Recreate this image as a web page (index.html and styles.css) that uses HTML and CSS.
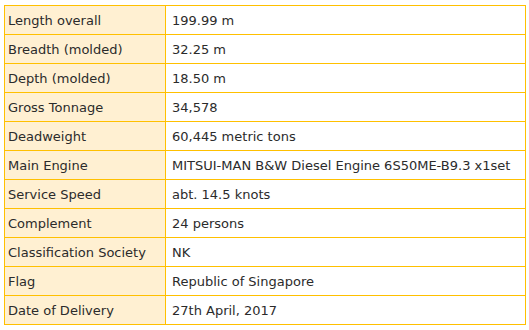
FILE: index.html
```html
<!DOCTYPE html>
<html>
<head>
<meta charset="utf-8">
<link rel="stylesheet" href="styles.css">
</head>
<body>
<table class="spec">
<tr><th>Length overall</th><td>199.99 m</td></tr>
<tr><th>Breadth (molded)</th><td>32.25 m</td></tr>
<tr><th>Depth (molded)</th><td>18.50 m</td></tr>
<tr><th>Gross Tonnage</th><td>34,578</td></tr>
<tr><th>Deadweight</th><td>60,445 metric tons</td></tr>
<tr><th>Main Engine</th><td>MITSUI-MAN B&amp;W Diesel Engine 6S50ME-B9.3 x1set</td></tr>
<tr><th>Service Speed</th><td>abt. 14.5 knots</td></tr>
<tr><th>Complement</th><td>24 persons</td></tr>
<tr><th>Classification Society</th><td>NK</td></tr>
<tr><th>Flag</th><td>Republic of Singapore</td></tr>
<tr><th>Date of Delivery</th><td>27th April, 2017</td></tr>
</table>
</body>
</html>
```
FILE: styles.css
```css
html, body { margin: 0; padding: 0; background: #fff; }
body { padding: 5px 0 0 4px; }
.spec {
  border-collapse: collapse;
  width: 522px;
  font-family: "DejaVu Sans", Verdana, sans-serif;
  font-size: 13px;
  color: #2b2b2b;
}
.spec th, .spec td {
  border: 1px solid #FFC000;
  height: 29px;
  padding: 0 0 0 5px;
  text-align: left;
  font-weight: normal;
  box-sizing: border-box;
}
.spec th {
  width: 161px;
  background: #FFF0D2;
  padding-left: 3px;
}
.spec td { padding-left: 6px; }
```
